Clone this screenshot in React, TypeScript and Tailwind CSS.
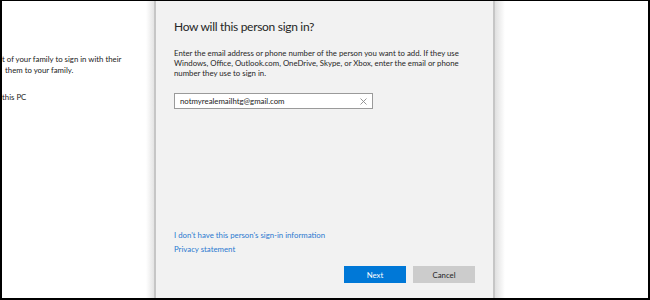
import React from 'react'

export default function App() {
  return (
    <div className="w-[650px] h-[300px] overflow-hidden bg-white border-black border-t border-l-2 border-r-2 border-b-2 flex text-[#1f1f1f] font-['Lato',sans-serif]">
      {/* settings page behind the dialog */}
      <div className="w-[144px] shrink-0 overflow-hidden pt-[53px] text-[7.8px] leading-[11px] text-[#222]">
        <div className="whitespace-nowrap">t of your family to sign in with their</div>
        <div className="whitespace-nowrap pl-[3px]">them to your family.</div>
        <div className="whitespace-nowrap mt-[16px]">this PC</div>
      </div>

      <div className="w-[8px] shrink-0 bg-gradient-to-r from-white to-[#e4e4e4]" />

      {/* dialog */}
      <div className="w-[341px] shrink-0 bg-[#f2f2f2] border-l-2 border-r-2 border-[#c6c6c6] flex flex-col px-[18px] pt-[19px] pb-[15px]">
        <h1 className="text-[12px] leading-[14px] tracking-[-0.3px] text-[#262626]">How will this person sign in?</h1>
        <p className="mt-[14px] text-[7.8px] leading-[10px] text-[#262626]">
          Enter the email address or phone number of the person you want to add. If they use Windows, Office,
          Outlook.com, OneDrive, Skype, or Xbox, enter the email or phone number they use to sign in.
        </p>
        <div className="mt-[15px] w-[199px] h-[16px] bg-white border border-[#9a9a9a] flex items-center pl-[5px] pr-[5px]">
          <span className="flex-1 text-[7.8px] leading-[10px] text-[#222]">notmyrealemailhtg@gmail.com</span>
          <svg width="7" height="7" viewBox="0 0 7 7" className="shrink-0">
            <path d="M0.5 0.5L6.5 6.5M6.5 0.5L0.5 6.5" stroke="#8a8a8a" strokeWidth="0.9" />
          </svg>
        </div>

        <div className="flex-1" />

        <a className="text-[7.8px] leading-[10px] text-[#2b79d0]">I don't have this person's sign-in information</a>
        <a className="mt-[4px] text-[7.8px] leading-[10px] text-[#2b79d0]">Privacy statement</a>

        <div className="mt-[12px] flex justify-end gap-[7px]">
          <button className="w-[62px] h-[17px] bg-[#0078d7] text-white text-[7.8px] leading-[10px]">Next</button>
          <button className="w-[62px] h-[17px] bg-[#cccccc] text-[#1f1f1f] text-[7.8px] leading-[10px]">Cancel</button>
        </div>
      </div>

      <div className="w-[10px] shrink-0 bg-gradient-to-r from-[#e0e0e0] to-white" />
      <div className="flex-1 bg-white" />
    </div>
  )
}
